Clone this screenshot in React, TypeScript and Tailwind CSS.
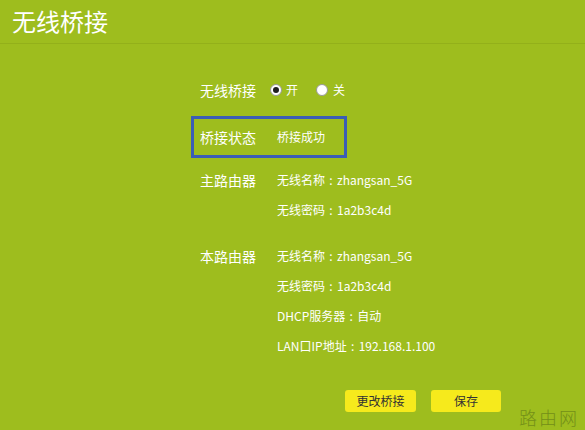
import React from "react";

const font = { fontFamily: '"Noto Sans CJK SC", "Noto Sans", sans-serif' };

function Radio({ checked }: { checked?: boolean }) {
  return (
    <span className="w-[12px] h-[12px] rounded-full bg-white border border-[#9a9a9a] flex items-center justify-center">
      {checked && <span className="w-[6px] h-[6px] rounded-full bg-[#1e1e1e]" />}
    </span>
  );
}

function Colon() {
  return <span className="inline-block w-[12px] text-center">:</span>;
}

function Row({ label, children }: { label?: string; children: React.ReactNode }) {
  return (
    <div className="flex items-center h-[30px]">
      <div className="w-[77px] text-[14px] text-white">{label}</div>
      <div className="text-[12px] text-white">{children}</div>
    </div>
  );
}

export default function App() {
  return (
    <div
      className="relative w-[585px] h-[430px] bg-[#9ebd1e] overflow-hidden"
      style={font}
    >
      <div className="h-[44px] border-b border-[#93b01a] pl-[12px] flex items-center">
        <h1 className="text-[24px] leading-none text-white pb-[2px]">无线桥接</h1>
      </div>

      <div className="pl-[200px] pt-[31px]">
        <div className="flex items-center h-[30px]">
          <div className="w-[70px] text-[14px] text-white">无线桥接</div>
          <label className="flex items-center gap-[4px] text-[12px] text-white">
            <Radio checked />
            <span>开</span>
          </label>
          <label className="flex items-center gap-[5px] ml-[18px] text-[12px] text-white">
            <Radio />
            <span>关</span>
          </label>
        </div>

        <div className="ml-[-9px] mt-[11px] w-[156px] h-[42px] border-[3px] border-[#3a5db6] pl-[6px] flex items-center">
          <div className="w-[77px] text-[14px] text-white">桥接状态</div>
          <div className="text-[12px] text-white">桥接成功</div>
        </div>

        <div className="mt-[7px]">
          <Row label="主路由器">无线名称<Colon />zhangsan_5G</Row>
          <Row>无线密码<Colon />1a2b3c4d</Row>
        </div>

        <div className="mt-[16px]">
          <Row label="本路由器">无线名称<Colon />zhangsan_5G</Row>
          <Row>无线密码<Colon />1a2b3c4d</Row>
          <Row>DHCP服务器<Colon />自动</Row>
          <Row>LAN口IP地址<Colon />192.168.1.100</Row>
        </div>

        <div className="flex gap-[15px] ml-[145px] mt-[29px]">
          <button className="w-[71px] h-[22px] rounded-[3px] bg-[#f6ea1c] text-[12px] text-[#333]">
            更改桥接
          </button>
          <button className="w-[70px] h-[22px] rounded-[3px] bg-[#f6ea1c] text-[12px] text-[#333]">
            保存
          </button>
        </div>
      </div>

      <div className="absolute right-[6px] bottom-[4px] text-[18px] leading-none tracking-[2px] font-light text-[#738f18]">
        路由网
      </div>
    </div>
  );
}
